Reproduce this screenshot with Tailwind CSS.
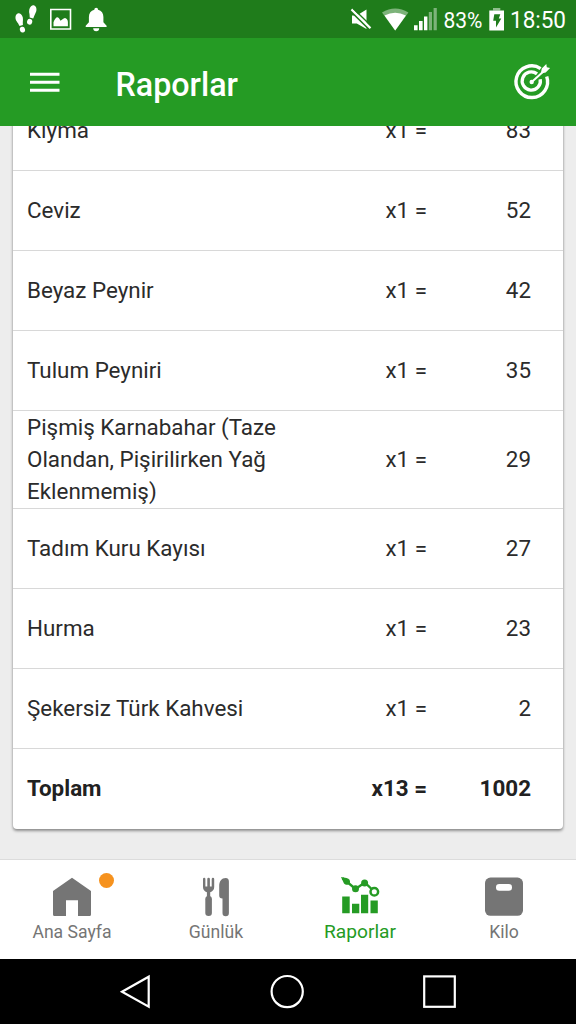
<!DOCTYPE html>
<html lang="tr">
<head>
<meta charset="utf-8">
<title>Raporlar</title>
<script src="https://cdn.jsdelivr.net/npm/@tailwindcss/browser@4"></script>
</head>
<body class="w-[576px] h-[1024px] overflow-hidden flex flex-col bg-[#ededed] font-['Roboto',sans-serif] text-[#2b2b2b]">
  <div class="h-[38px] shrink-0 bg-[#1f7c1b] text-white">
    <svg class="float-left" width="120" height="38" viewBox="0 0 120 38" fill="#fff">
      <ellipse cx="19.2" cy="18.3" rx="3.7" ry="5.1" transform="rotate(-12 19.2 18.3)"/>
      <path d="M16.8 21l5.900-1.500.2 5.600-3.400.9z"/>
      <ellipse cx="22.5" cy="29.6" rx="2.6" ry="2.900" transform="rotate(-15 22.5 29.8)"/>
      <ellipse cx="32.8" cy="10.2" rx="3.6" ry="5.1" transform="rotate(12 32.8 10.2)"/>
      <path d="M29.400 11.500l6 1.500-2.200 5.400-3.500-.9z"/>
      <ellipse cx="29.6" cy="21.7" rx="2.6" ry="2.900" transform="rotate(15 29.6 21.9)"/>
      <path d="M50 8.7h21.3v21H50zM51.6 10.2v18h18.1v-18z" fill-rule="evenodd"/>
      <path d="M53.5 26.3v-4c1-3 2.500-5 4-5 1.500.2 2 2 3 3.400 1.500-.200 2.500-2.600 4.500-2.600 1.500.2 2.900 2 2.900 4v4.200z"/>
      <path d="M94.3 9.7a1.9 1.9 0 0 1 3.8 0c3.5 1 5.3 3.6 5.3 7.2v5.4l3.2 3.4v1.2H85.7v-1.2l3.2-3.4v-5.4c0-3.6 1.9-6.2 5.4-7.2zM93.2 28.2h6a3 3 0 0 1-6 0z"/>
    </svg>
    <svg class="float-right" width="236" height="38" viewBox="340 0 236 38" fill="#fff">
      <path d="M352 15.500h4.800l9.700-6v19.500l-9.700-5.500H352z"/>
      <path d="M350.500 10.800l19 18.700" stroke="#1f7c1b" stroke-width="2"/>
      <path d="M351.500 9.4l19 18.7" stroke="#fff" stroke-width="2.200"/>
      <path d="M353 8.300l19 18.500" stroke="#1f7c1b" stroke-width="1.300"/>
      <path d="M382 12.5q13.2-8 26.4 0L395.200 30.600z" opacity=".42"/>
      <path d="M384.500 15.400q10.700-5.500 21.400 0L395.200 30.600z"/>
      <path d="M414 25.300h3.600v5H414zM419 21h3.600v9.300H419zM424 16.500h3.400v13.800H424z"/>
      <path d="M428.800 12h3.200v18.300h-3.200zM433.600 8h3.200v22.300h-3.200z" opacity=".42"/>
      <text x="443.500" y="27.800" font-size="21.500" textLength="39" lengthAdjust="spacingAndGlyphs">83%</text>
      <path d="M493 8h7.300v2.500H493z" opacity=".5"/>
      <path d="M489.300 10.500h14.700v20h-14.700z"/>
      <path d="M494.300 14.300h6l-1.500 4.200h2.500l-5.300 9v-6.700h-2.800z" fill="#1f7c1b"/>
      <text x="510" y="28" font-size="23" textLength="56" lengthAdjust="spacingAndGlyphs">18:50</text>
    </svg>
  </div>
  <header class="h-[88px] shrink-0 bg-[#259b24] text-white flex items-center pl-[30px] pr-[24px]">
    <svg class="shrink-0" width="30" height="20" viewBox="0 0 30 20" fill="#fff"><path d="M0 .8h29.500v3H0zM0 8.800h29.500v3H0zM0 16.800h29.500v3H0z"/></svg>
    <h1 class="ml-[55px] mt-[4px] flex-1 leading-10 font-medium"><svg class="block" width="140" height="42" fill="#fff"><text x="0.500" y="32.500" font-size="33" textLength="122.500" lengthAdjust="spacingAndGlyphs">Raporlar</text></svg></h1>
    <svg class="shrink-0" width="40" height="40" viewBox="512 62 40 40" fill="none" stroke="#fff">
      <path d="M540.600 68.600A15.800 15.800 0 1 0 546.700 76.500" stroke-width="3.400"/>
      <path d="M537 73.900A9.100 9.100 0 1 0 540.200 79.200" stroke-width="3.300"/>
      <path d="M531.700 82L544 71" stroke-width="2"/>
      <circle cx="531.700" cy="82" r="2.200" fill="#fff" stroke="none"/>
      <path d="M540.800 73.500l1-5 4.500-4.500.5 3.300 3.300.6-4.400 4.700z" fill="#fff" stroke="none"/>
    </svg>
  </header>
  <main class="flex-1 min-h-0 overflow-hidden flex flex-col justify-end px-[13px] pb-[30px]">
    <div class="shrink-0 bg-white rounded-[4px] shadow-[0_2px_3px_rgba(0,0,0,0.38),0_0_3px_rgba(0,0,0,0.12)] text-[22.4px] leading-8">
      <div class="h-[80px] border-b border-[#d8d8d8] flex items-center pl-[14px] pr-[32px] pb-px"><span class="w-[300px]">Kıyma</span><span class="flex-1 text-right pr-[2px]">x1 =</span><span class="w-[102px] text-right">83</span></div>
      <div class="h-[80px] border-b border-[#d8d8d8] flex items-center pl-[14px] pr-[32px] pb-px"><span class="w-[300px]">Ceviz</span><span class="flex-1 text-right pr-[2px]">x1 =</span><span class="w-[102px] text-right">52</span></div>
      <div class="h-[80px] border-b border-[#d8d8d8] flex items-center pl-[14px] pr-[32px] pb-px"><span class="w-[300px]">Beyaz Peynir</span><span class="flex-1 text-right pr-[2px]">x1 =</span><span class="w-[102px] text-right">42</span></div>
      <div class="h-[80px] border-b border-[#d8d8d8] flex items-center pl-[14px] pr-[32px] pb-px"><span class="w-[300px]">Tulum Peyniri</span><span class="flex-1 text-right pr-[2px]">x1 =</span><span class="w-[102px] text-right">35</span></div>
      <div class="h-[98px] border-b border-[#d8d8d8] flex items-center pl-[14px] pr-[32px] pb-px"><span class="w-[300px]">Pişmiş Karnabahar (Taze<br>Olandan, Pişirilirken Yağ<br>Eklenmemiş)</span><span class="flex-1 text-right pr-[2px]">x1 =</span><span class="w-[102px] text-right">29</span></div>
      <div class="h-[80px] border-b border-[#d8d8d8] flex items-center pl-[14px] pr-[32px] pb-px"><span class="w-[300px]">Tadım Kuru Kayısı</span><span class="flex-1 text-right pr-[2px]">x1 =</span><span class="w-[102px] text-right">27</span></div>
      <div class="h-[80px] border-b border-[#d8d8d8] flex items-center pl-[14px] pr-[32px] pb-px"><span class="w-[300px]">Hurma</span><span class="flex-1 text-right pr-[2px]">x1 =</span><span class="w-[102px] text-right">23</span></div>
      <div class="h-[80px] border-b border-[#d8d8d8] flex items-center pl-[14px] pr-[32px] pb-px"><span class="w-[300px]">Şekersiz Türk Kahvesi</span><span class="flex-1 text-right pr-[2px]">x1 =</span><span class="w-[102px] text-right">2</span></div>
      <div class="h-[80px] flex items-center pl-[14px] pr-[32px] pb-[2px] font-bold text-[#212121]"><span class="w-[300px]">Toplam</span><span class="flex-1 text-right pr-[2px]">x13 =</span><span class="w-[102px] text-right">1002</span></div>
    </div>
  </main>
  <nav class="h-[100px] shrink-0 bg-white border-t border-[#dcdcdc] grid grid-cols-4 text-[#757575] text-[17.6px]">
    <div class="relative flex flex-col items-center pt-[17px]">
      <svg width="40" height="40" viewBox="0 0 40 40"><path d="M20 .800L39 14v23.500a1.500 1.500 0 0 1-1.500 1.500H26V23.300H14V39H2.500A1.500 1.500 0 0 1 1 37.500V14z" fill="#757575"/></svg>
      <span class="mt-px leading-7">Ana Sayfa</span>
      <span class="absolute left-[99px] top-[13px] size-[14.500px] rounded-full bg-[#f6921e]"></span>
    </div>
    <div class="flex flex-col items-center pt-[17px]">
      <svg width="40" height="40" viewBox="196 876.5 40 40" fill="#757575">
        <path d="M203 878.500a1.200 1.200 0 0 1 2.400 0V886h1.900v-7.500a1.200 1.200 0 0 1 2.600 0V886h1.800v-7.500a1.200 1.200 0 0 1 2.500 0v8c0 3-1.600 4.200-4 5.300v5h-3.300v-5c-2.400-1.100-3.900-2.300-3.900-5.300z"/>
        <rect x="205.300" y="895.500" width="6.600" height="20" rx="3.200"/>
        <path d="M219.200 885.500c0-5 2.500-8 6.500-8 2.200 0 3.200 1.500 3.200 3.500v31.500a3.200 3.200 0 0 1-6.400 0V898c-2.300 0-3.300-1-3.300-3z"/>
      </svg>
      <span class="mt-px leading-7">Günlük</span>
    </div>
    <div class="flex flex-col items-center pt-[17px] text-[#259b24]">
      <svg width="40" height="40" viewBox="340 876.5 40 40" fill="#259b24">
        <path d="M342.200 896h7.500v16.800h-7.500zM352 903.300h7.300v9.500H352zM361 894.300h7.200v18.500H361zM370.500 900h7.300v12.800h-7.300z"/>
        <path d="M342.500 877.800l3.500 2.700 9.500 8 9.300-6.500 9.400 9" fill="none" stroke="#259b24" stroke-width="2.400"/>
        <path d="M341 876.600l5.500 1c3 .700 3.900 2.500 3.400 4.700-.700 2.500-4.200 2.700-5.900.700z"/>
        <circle cx="355.500" cy="888.300" r="3.500"/><circle cx="364.600" cy="882.400" r="3.500"/>
        <circle cx="374.300" cy="891.200" r="3.800" fill="#fff" stroke="#259b24" stroke-width="2.500"/>
      </svg>
      <span class="mt-[1px] leading-7 text-[19.200px]">Raporlar</span>
    </div>
    <div class="flex flex-col items-center pt-[17px]">
      <svg width="40" height="40" viewBox="0 0 40 40"><rect x="1" y=".600" width="38" height="38.200" rx="5.500" fill="#757575"/><rect x="12" y="7" width="16" height="6.700" rx="3.300" fill="#fff"/></svg>
      <span class="mt-px leading-7">Kilo</span>
    </div>
  </nav>
  <div class="h-[65px] shrink-0 bg-black">
    <svg class="block" width="576" height="65" viewBox="0 959 576 65" fill="none" stroke="#fff" stroke-width="2.200">
      <path d="M122 991.700l26.700-15v30z"/>
      <circle cx="287.200" cy="991.600" r="15.600"/>
      <rect x="424.200" y="976.400" width="30.600" height="30.400"/>
    </svg>
  </div>
</body>
</html>
